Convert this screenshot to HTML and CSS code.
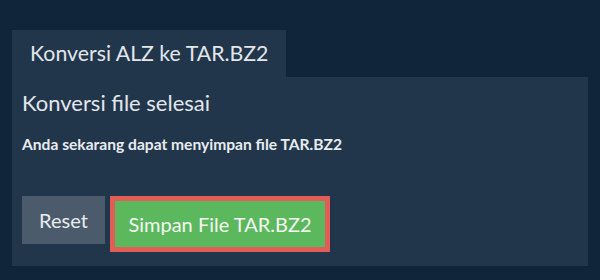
FILE: index.html
```html
<!DOCTYPE html>
<html>
<head>
<meta charset="utf-8">
<link rel="stylesheet" href="styles.css">
</head>
<body>
<div class="wrap">
  <div class="tab">Konversi ALZ ke TAR.BZ2</div>
  <div class="panel">
    <h2 class="title">Konversi file selesai</h2>
    <p class="msg">Anda sekarang dapat menyimpan file TAR.BZ2</p>
    <div class="actions">
      <button class="btn reset">Reset</button>
      <button class="btn save">Simpan File TAR.BZ2</button>
    </div>
  </div>
</div>
</body>
</html>
```
FILE: styles.css
```css
html, body {
  margin: 0;
  padding: 0;
  background: #10243a;
  font-family: Lato, "Open Sans", sans-serif;
  color: #e8ecef;
}
.wrap {
  padding: 30px 12px 14px 12px;
}
.tab {
  display: inline-block;
  background: #22364b;
  height: 47px;
  line-height: 47px;
  padding: 0 18px;
  font-size: 21.3px;
  font-weight: 400;
  color: #e2e7ec;
}
.panel {
  background: #22364b;
  padding: 11px 10px 10px 10px;
  height: 168px;
}
.title {
  margin: 0;
  font-weight: 400;
  font-size: 22px;
  line-height: 29px;
  color: #e2e7ec;
}
.msg {
  margin: 18px 0 0 0;
  font-weight: 700;
  font-size: 15.6px;
  line-height: 18px;
}
.actions {
  display: flex;
  align-items: flex-start;
  gap: 5px;
  margin-top: 43px;
}
.btn {
  font-family: Lato, "Open Sans", sans-serif;
  font-size: 20px;
  font-weight: 400;
  color: #f4f7f4;
  border: none;
  margin: 0;
  cursor: pointer;
}
.reset {
  background: #4b5b6c;
  width: 83px;
  height: 48px;
  padding: 0;
  color: #e8ecef;
}
.save {
  background: #5cb85c;
  border: 5px solid #e05d58;
  width: 220px;
  height: 56px;
  padding: 0;
}
```
